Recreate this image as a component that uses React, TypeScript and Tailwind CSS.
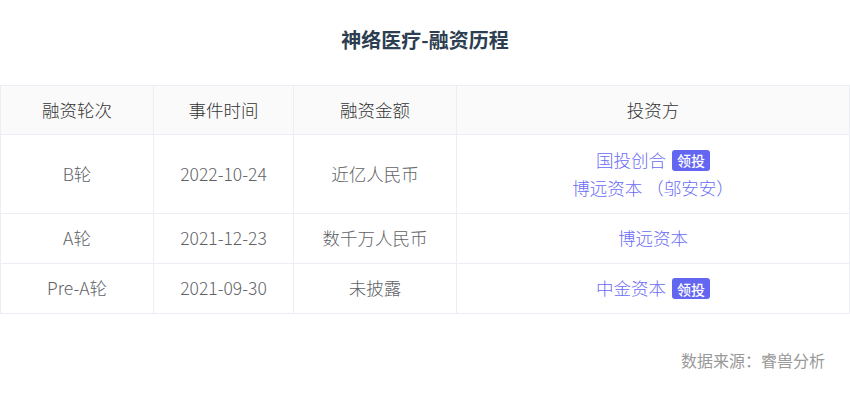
const FONT = { fontFamily: '"Noto Sans CJK SC", "Noto Sans", sans-serif' };

type Investor = { name: string; lead?: boolean };
type Round = { round: string; date: string; amount: string; investors: Investor[] };

const ROUNDS: Round[] = [
  {
    round: 'B轮',
    date: '2022-10-24',
    amount: '近亿人民币',
    investors: [{ name: '国投创合', lead: true }, { name: '博远资本 （邬安安）' }],
  },
  { round: 'A轮', date: '2021-12-23', amount: '数千万人民币', investors: [{ name: '博远资本' }] },
  { round: 'Pre-A轮', date: '2021-09-30', amount: '未披露', investors: [{ name: '中金资本', lead: true }] },
];

function LeadBadge() {
  return (
    <span className="ml-[6px] inline-flex h-[21px] items-center rounded-[3px] bg-[#6366f1] px-[5px] text-[14px] font-medium leading-none text-white">
      领投
    </span>
  );
}

export default function App() {
  return (
    <div className="h-[405px] w-[850px] bg-white" style={FONT}>
      <h1 className="pt-[25px] text-center text-[20px] font-bold leading-[30px] text-[#2c3e50]">
        神络医疗-融资历程
      </h1>
      <table className="mt-[30px] w-[850px] table-fixed border-collapse text-center text-[17.5px] font-light">
        <colgroup>
          <col className="w-[153px]" />
          <col className="w-[140px]" />
          <col className="w-[163px]" />
          <col />
        </colgroup>
        <thead>
          <tr className="h-[49px] bg-[#fafafa] text-[#333]">
            {['融资轮次', '事件时间', '融资金额', '投资方'].map((h) => (
              <th key={h} className="border border-[#ebeef5] font-light">
                {h}
              </th>
            ))}
          </tr>
        </thead>
        <tbody className="text-[#606266]">
          {ROUNDS.map((r) => (
            <tr key={r.round} className={r.investors.length > 1 ? 'h-[79px]' : 'h-[50px]'}>
              <td className="border border-[#ebeef5]">{r.round}</td>
              <td className="border border-[#ebeef5]">{r.date}</td>
              <td className="border border-[#ebeef5]">{r.amount}</td>
              <td className="border border-[#ebeef5] text-[#6b6cf6]">
                {r.investors.map((inv) => (
                  <div key={inv.name} className="flex h-[28px] items-center justify-center">
                    <span>{inv.name}</span>
                    {inv.lead && <LeadBadge />}
                  </div>
                ))}
              </td>
            </tr>
          ))}
        </tbody>
      </table>
      <p className="mt-[35px] pr-[25px] text-right text-[16px] leading-[22px] text-[#999]">数据来源：睿兽分析</p>
    </div>
  );
}
